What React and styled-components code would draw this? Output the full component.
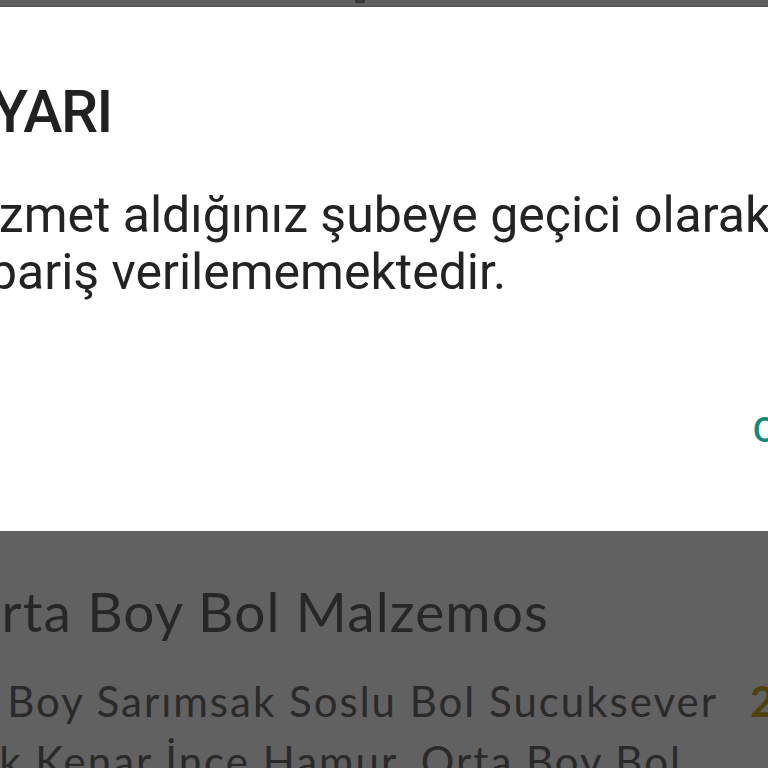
import React from "react";
import styled, { createGlobalStyle } from "styled-components";

const GlobalStyle = createGlobalStyle`
  html, body {
    margin: 0;
    padding: 0;
    background: #616161;
  }
`;

const Screen = styled.div`
  width: 768px;
  height: 768px;
  overflow: hidden;
  display: flex;
  flex-direction: column;
  background: #616161;
`;

const StatusStrip = styled.div`
  height: 6px;
  flex-shrink: 0;
  background: #5f5f5f;
  border-bottom: 1px solid #505050;
  display: flex;
  padding-left: 355px;
`;

const Notch = styled.div`
  width: 10px;
  height: 3px;
  background: #3a3a3a;
`;

const Dialog = styled.div`
  height: 524px;
  flex-shrink: 0;
  background: #ffffff;
  padding-top: 75px;
  box-sizing: border-box;
  font-family: Roboto, "Noto Sans", sans-serif;
  white-space: nowrap;
`;

const DialogInner = styled.div`
  margin-left: -46px;
  margin-right: -31px;
`;

const Title = styled.h2`
  margin: 0 0 0 1px;
  font-size: 59px;
  line-height: 60px;
  font-weight: 500;
  letter-spacing: -1.5px;
  color: #212121;
`;

const Message = styled.p`
  margin: 45px 0 0 -3px;
  font-size: 50px;
  line-height: 57px;
  font-weight: 400;
  color: #232323;
`;

const Actions = styled.div`
  display: flex;
  justify-content: flex-end;
  margin-top: 112px;
`;

const ActionButton = styled.button`
  border: none;
  background: none;
  padding: 0;
  font-family: Roboto, sans-serif;
  font-size: 35px;
  line-height: 35px;
  font-weight: 500;
  color: #13897a;
`;

const Backdrop = styled.div`
  flex: 1;
  background: #616161;
  padding-top: 47px;
  font-family: Lato, "Open Sans", sans-serif;
  white-space: nowrap;
`;

const ItemTitle = styled.div`
  margin-left: -43px;
  font-size: 55px;
  line-height: 66px;
  letter-spacing: 1.1px;
  color: #272727;
`;

const ItemRow = styled.div`
  display: flex;
  align-items: flex-start;
  gap: 32px;
  margin-top: 27px;
  margin-left: -98px;
`;

const ItemDesc = styled.div`
  font-size: 42px;
  line-height: 60px;
  letter-spacing: 2px;
  color: #2a2a2a;
`;

const Price = styled.div`
  font-size: 42px;
  line-height: 60px;
  font-weight: 700;
  color: #4f410d;
`;

export default function App() {
  return (
    <>
      <GlobalStyle />
      <Screen>
        <StatusStrip>
          <Notch />
        </StatusStrip>
        <Dialog>
          <DialogInner>
            <Title>UYARI</Title>
            <Message>
              Hizmet aldığınız şubeye geçici olarak
              <br />
              sipariş verilememektedir.
            </Message>
            <Actions>
              <ActionButton>OK</ActionButton>
            </Actions>
          </DialogInner>
        </Dialog>
        <Backdrop>
          <ItemTitle>Orta Boy Bol Malzemos</ItemTitle>
          <ItemRow>
            <ItemDesc>
              Orta Boy Sarımsak Soslu Bol Sucuksever
              <br />
              Sucuk Kenar İnce Hamur, Orta Boy Bol
            </ItemDesc>
            <Price>29,99 TL</Price>
          </ItemRow>
        </Backdrop>
      </Screen>
    </>
  );
}
